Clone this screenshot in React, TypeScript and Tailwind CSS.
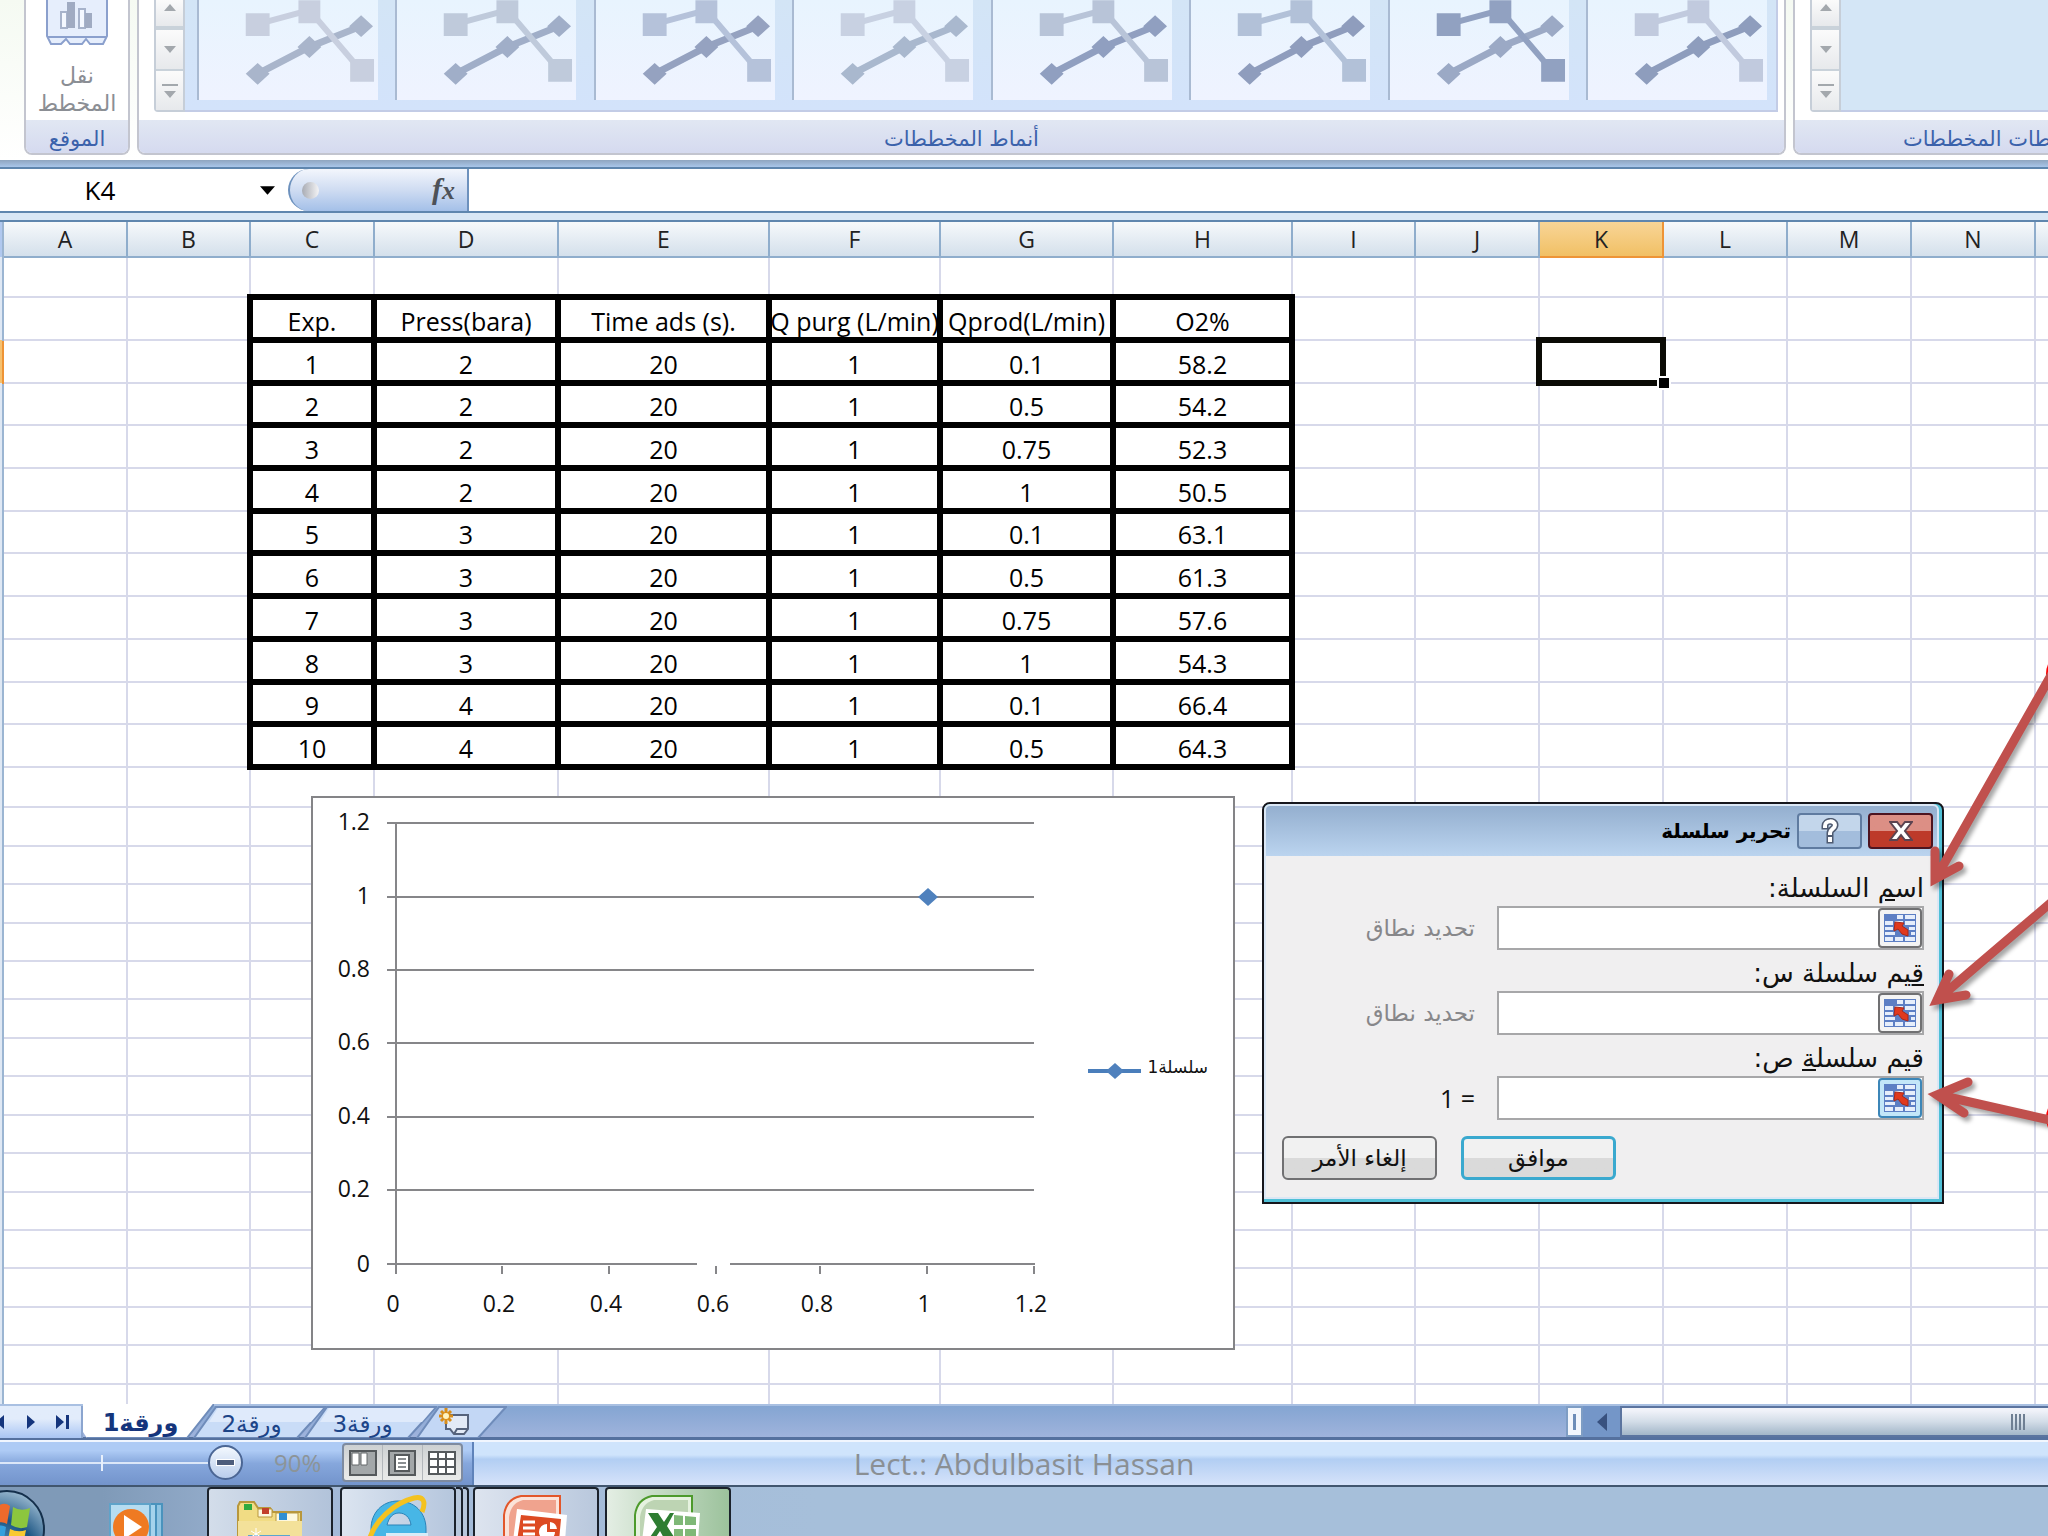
import React from "react";

const LATIN = "font-['Open_Sans','Lato',sans-serif]";
const ARABIC = "font-['DejaVu_Sans',sans-serif]";

/* ---------- Ribbon ---------- */

const galleryStyles = [
  { line: "#a9b5cb", box: "#c8cfdf" },
  { line: "#a0aec8", box: "#bfcadb" },
  { line: "#95a2c0", box: "#b5c2da" },
  { line: "#a9b8ce", box: "#c8d1e2" },
  { line: "#909fc0", box: "#b8c4d8" },
  { line: "#8f9dbd", box: "#b2c1d8" },
  { line: "#9ba9c5", box: "#91a1c1" },
  { line: "#8e9dbd", box: "#c1cade" },
];

function ScatterThumb({ line, box }: { line: string; box: string }) {
  return (
    <button
      aria-label="Chart style"
      className="h-[100px] w-[181px] shrink-0 border-l-2 border-[#a9bad2] bg-gradient-to-b from-[#e8f4fe] to-[#eff3ff]"
    >
      <svg viewBox="0 0 180 100" className="block h-[100px] w-[179px]">
        <path d="M59 74 L111 47 L163 26" stroke={line} strokeWidth="7" fill="none" />
        <path d="M59 24 L111 10 L164 72" stroke={box} strokeWidth="6" fill="none" />
        <path
          d="M59 63l12 11-12 11-12-11zM111 36l12 11-12 11-12-11zM163 15l12 11-12 11-12-11z"
          fill={line}
        />
        <path d="M47 13h24v23H47zM100 0h22v23h-22zM152 59h24v23h-24z" fill={box} />
      </svg>
    </button>
  );
}

function GallerySpin() {
  const cell =
    "flex w-full items-center justify-center border-[#c9d2da] bg-gradient-to-b from-[#fbfbfb] to-[#e7e9ec]";
  return (
    <div className="flex h-[112px] w-[31px] shrink-0 flex-col rounded-bl border-x-2 border-b-2 border-[#c6ced8]">
      <button aria-label="Scroll up" className={`${cell} h-7 border-b-2 pb-3`}>
        <svg viewBox="0 0 12 7" className="h-[7px] w-3">
          <path d="M6 0l6 7H0z" fill="#a3a8ad" />
        </svg>
      </button>
      <button aria-label="Scroll down" className={`${cell} h-[43px] border-b-2 border-t-2`}>
        <svg viewBox="0 0 12 7" className="h-[7px] w-3">
          <path d="M0 0h12L6 7z" fill="#a3a8ad" />
        </svg>
      </button>
      <button aria-label="More styles" className={`${cell} h-[39px]`}>
        <svg viewBox="0 0 16 14" className="h-[14px] w-4">
          <path d="M0 0h16v2H0zM2 7h12L8 14z" fill="#a3a8ad" />
        </svg>
      </button>
    </div>
  );
}

function PanelTitle({ children, className }: { children: React.ReactNode; className: string }) {
  return (
    <div
      dir="rtl"
      className={`flex h-[33px] shrink-0 items-center whitespace-nowrap bg-gradient-to-b from-[#e1e7f3] to-[#d5daef] pt-1 text-[21px] leading-7 text-[#3b62ab] ${ARABIC} ${className}`}
    >
      {children}
    </div>
  );
}

function Ribbon() {
  const panel =
    "flex h-[155px] flex-col overflow-hidden rounded-b-lg border-x-2 border-b-2 border-[#c3c5cf] bg-white";
  return (
    <header className="flex h-40 shrink-0 items-start gap-[7px] bg-gradient-to-b from-[#f5faf2] to-white pl-6">
      <section className={`${panel} w-[106px] shrink-0`}>
        <button className="flex flex-1 flex-col items-center">
          <svg viewBox="0 0 62 46" className="h-[46px] w-[62px]">
            <path
              d="M1 -4h60v40l-4 8H44l-4-5-4 5H24l-4-5-5 5H5l-4-8z"
              fill="#e6eefc"
              stroke="#8ba0cd"
              strokeWidth="2"
            />
            <path d="M2 37h58" stroke="#8ba0cd" strokeWidth="2" />
            <path d="M15 12h6v16h-6zM33 9h6v19h-6z" fill="#f4f8ff" stroke="#a7b3cb" strokeWidth="2" />
            <path d="M21 2h8v26h-8zM39 13h7v15h-7z" fill="#a0abc2" />
          </svg>
          <span
            dir="rtl"
            className={`mt-4 flex flex-col text-center text-[22px] leading-7 text-[#8b8e94] ${ARABIC}`}
          >
            <span>نقل</span>
            <span>المخطط</span>
          </span>
        </button>
        <PanelTitle className="justify-center">الموقع</PanelTitle>
      </section>

      <section className={`${panel} min-w-0 flex-1`}>
        <div className="flex flex-1 items-start pl-[15px] pr-[6px]">
          <GallerySpin />
          <div className="flex h-[112px] min-w-0 flex-1 items-start justify-between overflow-hidden border-b-2 border-r-2 border-[#c3cce6] bg-gradient-to-b from-[#d3e5f6] to-[#d3e3fb] pl-3 pr-[9px]">
            {galleryStyles.map((s, i) => (
              <ScatterThumb key={i} line={s.line} box={s.box} />
            ))}
          </div>
        </div>
        <PanelTitle className="justify-center">أنماط المخططات</PanelTitle>
      </section>

      <section className="flex h-[155px] w-[255px] shrink-0 flex-col overflow-hidden rounded-bl-lg border-b-2 border-l-2 border-[#c3c5cf] bg-white">
        <div className="flex flex-1 items-start pl-[15px]">
          <GallerySpin />
          <div className="h-[112px] flex-1 border-b-2 border-[#c3cce6] bg-[#d4e6f6]" />
        </div>
        <div className="overflow-hidden">
          <PanelTitle className="w-[420px] justify-end pl-[108px]">تخطيطات المخططات</PanelTitle>
        </div>
      </section>
    </header>
  );
}

/* ---------- Formula bar ---------- */

function FormulaBar() {
  return (
    <div className="flex h-[46px] shrink-0 items-stretch border-y-2 border-[#5f86ae] bg-white">
      <div className="flex w-72 shrink-0 items-center">
        <input
          aria-label="Name box"
          defaultValue="K4"
          className={`w-[200px] bg-transparent text-center text-[26px] text-black outline-none ${LATIN}`}
        />
        <button aria-label="Name list" className="ml-[60px] flex h-8 w-[15px] items-center">
          <svg viewBox="0 0 16 9" className="h-[9px] w-[15px]">
            <path d="M0 0h16L8 9z" fill="#000" />
          </svg>
        </button>
      </div>
      <button
        aria-label="Insert function"
        className="flex w-[181px] shrink-0 items-center rounded-l-full border-l-2 border-r-2 border-[#6d91bd] bg-gradient-to-b from-[#f3f6fc] via-[#cfdcf2] to-[#a4c0e8] pl-3 pr-3"
      >
        <span className="size-[17px] rounded-full bg-gradient-to-r from-[#a9acb4] to-[#f4f4f6]" />
        <span className="ml-auto font-['Liberation_Serif',serif] text-[30px] font-bold italic leading-8 text-[#4d5158]">
          f<span className="text-[26px]">x</span>
        </span>
      </button>
      <input aria-label="Formula" className="min-w-0 flex-1 bg-transparent outline-none" />
    </div>
  );
}

/* ---------- Sheet ---------- */

const columns = [
  { id: "A", w: 124 },
  { id: "B", w: 123 },
  { id: "C", w: 124 },
  { id: "D", w: 184 },
  { id: "E", w: 211 },
  { id: "F", w: 171 },
  { id: "G", w: 173 },
  { id: "H", w: 179 },
  { id: "I", w: 123 },
  { id: "J", w: 124 },
  { id: "K", w: 124 },
  { id: "L", w: 124 },
  { id: "M", w: 124 },
  { id: "N", w: 124 },
];

const rowHeights = [
  40, 43, 43, 42, 43, 43, 42, 43, 43, 43, 42, 43, 40, 39, 38, 39, 38, 38, 39, 38, 39, 38, 39, 38, 38, 39, 38, 39, 30,
];

const data = [
  ["Exp.", "Press(bara)", "Time ads (s).", "Q purg (L/min)", "Qprod(L/min)", "O2%"],
  ["1", "2", "20", "1", "0.1", "58.2"],
  ["2", "2", "20", "1", "0.5", "54.2"],
  ["3", "2", "20", "1", "0.75", "52.3"],
  ["4", "2", "20", "1", "1", "50.5"],
  ["5", "3", "20", "1", "0.1", "63.1"],
  ["6", "3", "20", "1", "0.5", "61.3"],
  ["7", "3", "20", "1", "0.75", "57.6"],
  ["8", "3", "20", "1", "1", "54.3"],
  ["9", "4", "20", "1", "0.1", "66.4"],
  ["10", "4", "20", "1", "0.5", "64.3"],
];

function Grid() {
  return (
    <table className={`w-full table-fixed border-collapse ${LATIN}`}>
      <colgroup>
        <col className="w-[3px]" />
        {columns.map((c) => (
          <col key={c.id} style={{ width: c.w }} />
        ))}
        <col />
      </colgroup>
      <thead>
        <tr className="h-[35px] bg-gradient-to-b from-[#f6f9fb] to-[#d3dfeb]">
          <th className="border-r-2 border-[#9bb5d2] bg-[#b0c8ef] p-0" />
          {columns.map((c) => (
            <th
              key={c.id}
              scope="col"
              className={
                c.id === "K"
                  ? "border-2 border-t-0 border-[#ee9436] bg-gradient-to-b from-[#f8d596] to-[#f1c064] p-0 text-[23px] font-normal leading-8 text-[#222]"
                  : "border-b-2 border-r-2 border-[#8fadcc] p-0 text-[23px] font-normal leading-8 text-[#222]"
              }
            >
              {c.id}
            </th>
          ))}
          <th className="border-b-2 border-[#8fadcc] p-0" />
        </tr>
      </thead>
      <tbody>
        {rowHeights.map((h, r) => (
          <tr key={r} style={{ height: h }}>
            <td
              className={
                r === 2
                  ? "border-r-2 border-[#ee9436] bg-[#f5c170] p-0"
                  : "border-r-2 border-[#9bb5d2] bg-[#dfe8f4] p-0"
              }
            />
            {columns.map((c, i) => {
              const value = r >= 1 && r <= 11 && i >= 2 && i <= 7 ? data[r - 1][i - 2] : null;
              if (value !== null) {
                return (
                  <td
                    key={c.id}
                    className="border-[6px] border-black p-0 pt-1 text-center text-[25px] leading-7 text-black"
                  >
                    <span className="-mx-2 flex justify-center whitespace-nowrap">{value}</span>
                  </td>
                );
              }
              return (
                <td key={c.id} className="relative border-2 border-[#d7d9ea] p-0">
                  {c.id === "K" && r === 2 && (
                    <span className="absolute -bottom-1 -left-1 -right-1 -top-1 z-10 block border-[6px] border-[#0b0b05]">
                      <span className="absolute -bottom-[10px] -right-[11px] block size-[14px] border-2 border-white bg-black" />
                    </span>
                  )}
                </td>
              );
            })}
            <td className="border-b-2 border-[#d7d9ea] p-0" />
          </tr>
        ))}
      </tbody>
    </table>
  );
}

/* ---------- Chart ---------- */

const yTicks = [
  { label: "1.2", y: 25 },
  { label: "1", y: 99 },
  { label: "0.8", y: 172 },
  { label: "0.6", y: 245 },
  { label: "0.4", y: 319 },
  { label: "0.2", y: 392 },
];
const xTicks = [
  { label: "0", x: 83 },
  { label: "0.2", x: 189 },
  { label: "0.4", x: 296 },
  { label: "0.6", x: 403 },
  { label: "0.8", x: 507 },
  { label: "1", x: 614 },
  { label: "1.2", x: 721 },
];

function Chart() {
  return (
    <figure className="absolute left-[311px] top-[574px] z-10 h-[554px] w-[924px] border-2 border-[#848487] bg-white">
      <svg viewBox="0 0 920 550" className="block h-[550px] w-[920px] font-['Open_Sans',sans-serif]">
        <g stroke="#868689" strokeWidth="2">
          {yTicks.map((t) => (
            <line key={t.label} x1="74" x2="721" y1={t.y} y2={t.y} />
          ))}
          <path d="M74 466H384M417 466H722" />
          <line x1="83" x2="83" y1="25" y2="476" />
          {xTicks.slice(1).map((t) => (
            <line key={t.label} x1={t.x} x2={t.x} y1="468" y2="476" />
          ))}
        </g>
        <g fontSize="23" fill="#111" textAnchor="end">
          {yTicks.map((t) => (
            <text key={t.label} x="57" y={t.y + 7}>
              {t.label}
            </text>
          ))}
          <text x="57" y="474">
            0
          </text>
        </g>
        <g fontSize="23" fill="#111" textAnchor="middle">
          {xTicks.map((t) => (
            <text key={t.label} x={t.x - 3} y="514">
              {t.label}
            </text>
          ))}
        </g>
        <path d="M615 90l10 9-10 9-10-9z" fill="#4f81bd" />
        <path d="M775 273h53" stroke="#4a7ebb" strokeWidth="4" />
        <path d="M802 265l9 8-9 8-9-8z" fill="#4f81bd" />
        <text x="895" y="275" fontSize="17" fill="#111" direction="rtl" fontFamily="DejaVu Sans">
          سلسلة1
        </text>
      </svg>
    </figure>
  );
}

/* ---------- Dialog ---------- */

function RangeIcon() {
  return (
    <svg viewBox="0 0 32 28" className="h-7 w-8">
      <rect width="32" height="28" fill="#5d7fc4" />
      <path
        d="M13 1h6v4h-6zM21 1h10v4H21zM1 7h8v4H1zM11 7h8v4h-8zM21 7h10v4H21zM1 13h8v3H1zM25 13h6v3h-6zM1 18h10v3H1zM27 18h4v3h-4zM1 23h8v4H1zM11 23h8v4h-8zM21 23h10v4H21z"
        fill="#e6eefb"
      />
      <path
        d="M11 8l9 1-2 3 6 4v6l-6-2-4-5-4 2z"
        fill="#e0391d"
        stroke="#a8281a"
        strokeWidth="1"
      />
    </svg>
  );
}

function Field({
  id,
  label,
  hint,
  hintClass,
  active,
}: {
  id: string;
  label: React.ReactNode;
  hint: string;
  hintClass: string;
  active?: boolean;
}) {
  return (
    <div>
      <label htmlFor={id} className="block h-9 text-[26px] leading-9 text-[#111]">
        {label}
      </label>
      <div className="flex items-center gap-[22px]">
        <div className="flex h-11 w-[427px] items-center border-2 border-[#a7a7a9] bg-white">
          <button
            type="button"
            aria-label="Select range"
            className={
              active
                ? "flex h-10 w-[44px] items-center justify-center rounded border-2 border-[#3c86b8] bg-[#c3e6f8]"
                : "flex h-10 w-[44px] items-center justify-center rounded border-2 border-[#707072] bg-[#f4f4f4]"
            }
          >
            <RangeIcon />
          </button>
          <input id={id} className="h-full min-w-0 flex-1 bg-transparent px-2 outline-none" />
        </div>
        <span className={hintClass}>{hint}</span>
      </div>
    </div>
  );
}

function SeriesDialog() {
  const hint = "text-[23px] leading-8 text-[#87878a]";
  const titleBtn = "flex h-9 w-[65px] items-center justify-center rounded border-2";
  return (
    <div
      role="dialog"
      aria-labelledby="dlg-title"
      className={`absolute left-[1262px] top-[580px] z-20 w-[682px] rounded-t-lg border-2 border-[#16161c] bg-[#50c0d6] pb-[3px] pr-[3px] ${ARABIC}`}
    >
      <div className="rounded-t-md border-2 border-[#dbe7f5] bg-[#f0eff0]">
        <div className="flex h-[50px] items-center justify-end gap-[6px] rounded-t bg-gradient-to-b from-[#94afcf] to-[#bbd4ef] pr-1">
          <h2 id="dlg-title" dir="rtl" className="text-[20px] font-bold leading-8 text-black">
            تحرير سلسلة
          </h2>
          <button
            aria-label="Help"
            className={`${titleBtn} border-[#5f7ba0] bg-gradient-to-b from-[#c3d6eb] from-50% to-[#a3bddc] to-50%`}
          >
            <svg viewBox="0 0 20 26" className="h-[26px] w-5">
              <g fill="none" strokeLinecap="square">
                <path d="M5 8c0-6 10-6 10-1 0 4-5 4-5 8M10 21v1" stroke="#4e5a70" strokeWidth="7" />
                <path d="M5 8c0-6 10-6 10-1 0 4-5 4-5 8M10 21v1" stroke="#fff" strokeWidth="4" />
              </g>
            </svg>
          </button>
          <button
            aria-label="Close"
            className={`${titleBtn} border-[#4d1420] bg-gradient-to-b from-[#dc8f85] from-50% to-[#bd3a2a] to-50%`}
          >
            <svg viewBox="0 0 24 20" className="h-5 w-6">
              <g fill="#fff" stroke="#5c4350" strokeWidth="2">
                <path d="M1 1h7l4 5 4-5h7l-7 9 7 9h-7l-4-5-4 5H1l7-9z" />
              </g>
            </svg>
          </button>
        </div>
        <form dir="rtl" className="pb-[17px] pl-4 pr-[13px] pt-[14px]">
          <div className="flex flex-col gap-[5px]">
            <Field
              id="series-name"
              label={
                <>
                  اس<u>م</u> السلسلة:
                </>
              }
              hint="تحديد نطاق"
              hintClass={hint}
            />
            <Field
              id="series-x"
              label={
                <>
                  <u>ق</u>يم سلسلة س:
                </>
              }
              hint="تحديد نطاق"
              hintClass={hint}
            />
            <Field
              id="series-y"
              active
              label={
                <>
                  قيم سلسل<u>ة</u> ص:
                </>
              }
              hint="= 1"
              hintClass="font-['Open_Sans',sans-serif] text-[25px] leading-8 text-[#111]"
            />
          </div>
          <div className="mt-4 flex justify-end gap-6">
            <button
              type="button"
              className="h-11 w-[155px] rounded-md border-[3px] border-[#3aa9cf] bg-gradient-to-b from-[#f1f1f1] from-50% to-[#dadada] to-50% text-[23px] leading-8 text-[#111]"
            >
              موافق
            </button>
            <button
              type="button"
              className="h-11 w-[155px] rounded-md border-2 border-[#707072] bg-gradient-to-b from-[#f1f1f1] from-50% to-[#dadada] to-50% text-[23px] leading-8 text-[#111]"
            >
              إلغاء الأمر
            </button>
          </div>
        </form>
      </div>
    </div>
  );
}

function Arrows() {
  return (
    <svg
      viewBox="0 0 130 500"
      className="absolute left-[1918px] top-[428px] z-30 h-[500px] w-[130px] drop-shadow-[3px_4px_2px_rgba(0,0,0,0.35)]"
    >
      <ellipse cx="139" cy="24" rx="11" ry="17" fill="#f00" />
      <ellipse cx="139" cy="468" rx="11" ry="17" fill="#f00" />
      <g stroke="#c0504d" strokeWidth="9" fill="none" strokeLinecap="round" strokeLinejoin="miter">
        <path d="M136 20L18 228M17 201L17 229L41 216" />
        <path d="M136 250L19 350M31 324L19 350L48 345" />
        <path d="M136 471L21 445M50 432L19 445L46 463" />
      </g>
    </svg>
  );
}

/* ---------- Bottom bars ---------- */

function SheetTab({ label, className }: { label: string; className: string }) {
  return (
    <button
      dir="rtl"
      className={`relative flex h-8 w-[133px] items-center justify-center pr-4 pt-1 text-[23px] leading-7 text-[#1c4488] ${ARABIC} ${className}`}
    >
      <svg viewBox="0 0 133 32" preserveAspectRatio="none" className="absolute inset-0 h-full w-full">
        <path d="M1 32L23 1H132L104 32z" fill="#c9dcf7" stroke="#6f8cba" strokeWidth="2" />
        <path d="M16 16L25 2H130L118 16z" fill="#dfeafb" />
      </svg>
      <span className="relative">{label}</span>
    </button>
  );
}

function TabBar() {
  return (
    <div className="flex h-9 shrink-0 items-start border-b-[3px] border-t-2 border-b-[#55719f] border-t-[#a9c0e2] bg-gradient-to-b from-[#84a5d2] to-[#9fb3dc]">
      <div className="flex h-8 w-[83px] shrink-0 items-center gap-[20px] border-r-2 border-[#8ba5cf] bg-gradient-to-b from-[#e2ecfb] from-40% to-[#a9c5f3]">
        <button aria-label="Previous sheet">
          <svg viewBox="0 0 10 14" className="h-[14px] w-[10px]">
            <path d="M4 0v14L-4 7z" fill="#15357c" />
          </svg>
        </button>
        <button aria-label="Next sheet" className="-ml-1">
          <svg viewBox="0 0 10 14" className="h-[14px] w-[10px]">
            <path d="M1 0v14l8-7z" fill="#15357c" />
          </svg>
        </button>
        <button aria-label="Last sheet">
          <svg viewBox="0 0 14 14" className="h-[14px] w-[14px]">
            <path d="M0 0v14l8-7zM10 0h3v14h-3z" fill="#15357c" />
          </svg>
        </button>
      </div>
      <button
        dir="rtl"
        className={`relative z-10 -mt-[2px] flex h-[34px] w-[131px] items-center justify-center pr-4 pt-1 text-[24px] font-bold leading-7 text-[#15357c] ${ARABIC}`}
      >
        <svg viewBox="0 0 131 34" preserveAspectRatio="none" className="absolute inset-0 h-full w-full">
          <path d="M0 0H131L104 34H4L0 28z" fill="#fff" />
          <path d="M131 0L104 34H4" fill="none" stroke="#6f8cba" strokeWidth="2" />
        </svg>
        <span className="relative">ورقة1</span>
      </button>
      <SheetTab label="ورقة2" className="-ml-[21px]" />
      <SheetTab label="ورقة3" className="-ml-[22px]" />
      <button aria-label="Insert sheet" className="relative -ml-[21px] h-8 w-[91px]">
        <svg viewBox="0 0 91 32" className="block h-8 w-[91px]">
          <path d="M1 32L23 1H90L62 32z" fill="#c3d7f5" stroke="#6f8cba" strokeWidth="2" />
          <path d="M30 9h22v14l-4 5H38l-4-5h-4z" fill="#e3eaf6" stroke="#56637c" strokeWidth="2" />
          <path d="M38 28l3-5h11" fill="none" stroke="#56637c" strokeWidth="2" />
          <path d="M30 2v16M23 10h14M25 5l10 10M35 5L25 15" stroke="#d98d18" strokeWidth="3" />
          <circle cx="30" cy="10" r="3" fill="#fff3c0" />
        </svg>
      </button>

      <div className="ml-auto flex h-[31px] w-[482px] shrink-0 items-stretch">
        <div className="flex w-[17px] items-center justify-center border-2 border-[#7e9dc4] bg-[#f2f6fc]">
          <span className="h-4 w-[3px] bg-[#6d8db8]" />
        </div>
        <button aria-label="Scroll left" className="flex w-[37px] items-center justify-center bg-[#7496c8]">
          <svg viewBox="0 0 10 18" className="h-[18px] w-[10px]">
            <path d="M10 0v18L0 9z" fill="#38517f" />
          </svg>
        </button>
        <div className="flex flex-1 items-center justify-end border-2 border-r-0 border-[#5b749f] bg-gradient-to-b from-[#f0f2f9] from-10% via-[#d3dde8] via-50% to-[#a3b6c8]">
          <div className="mr-[23px] flex gap-[2px]">
            <span className="h-4 w-[2px] bg-[#6f7f93]" />
            <span className="h-4 w-[2px] bg-[#6f7f93]" />
            <span className="h-4 w-[2px] bg-[#6f7f93]" />
            <span className="h-4 w-[2px] bg-[#6f7f93]" />
          </div>
        </div>
      </div>
    </div>
  );
}

function StatusBar() {
  const view = "flex flex-1 items-center justify-center";
  return (
    <div className="relative flex h-[47px] shrink-0 border-b-2 border-t-2 border-b-[#41566f] border-t-[#f1f6fe] bg-gradient-to-b from-[#cfe4fc] from-30% via-[#b2cef3] via-40% to-[#d6e3fa]">
      <div className="flex w-[474px] shrink-0 items-center border-r-2 border-[#5f83ba] bg-gradient-to-b from-[#aecbf5] from-20% via-[#86a7dc] via-50% to-[#7394cc] pb-[2px]">
        <div className="flex w-[208px] items-center">
          <span className="h-[2px] w-[101px] bg-[#dbe7f8]" />
          <span className="h-4 w-[2px] bg-[#e8f0fb]" />
          <span className="h-[2px] flex-1 bg-[#dbe7f8]" />
        </div>
        <button
          aria-label="Zoom out"
          className="flex size-[35px] items-center justify-center rounded-full border-2 border-[#4b6694] bg-gradient-to-b from-[#f3f8fe] to-[#b9cdec]"
        >
          <span className="h-[7px] w-[19px] border border-white bg-[#4d5d7c]" />
        </button>
        <span className="ml-[31px] w-[68px] font-['Open_Sans',sans-serif] text-[24px] leading-8 text-[#8c9498]">
          90%
        </span>
        <div className="flex h-[39px] w-[121px] overflow-hidden rounded border-2 border-[#7e8ba0] bg-gradient-to-b from-[#ccd0d2] via-[#dedfdf] to-[#eaebea]">
          <button aria-label="Page break preview" className={`${view} border-r border-[#b3b7bb]`}>
            <svg viewBox="0 0 28 26" className="h-[26px] w-7">
              <rect x="1" y="1" width="26" height="24" fill="#a3a7a9" stroke="#55595c" strokeWidth="2" />
              <path d="M3 3h7v12H3zM12 3h6v12h-6z" fill="#fff" stroke="#64686b" strokeWidth="1" />
            </svg>
          </button>
          <button aria-label="Page layout" className={`${view} border-r border-[#b3b7bb]`}>
            <svg viewBox="0 0 28 26" className="h-[26px] w-7">
              <rect x="1" y="1" width="26" height="24" fill="#a3a7a9" stroke="#55595c" strokeWidth="2" />
              <rect x="7" y="5" width="14" height="16" fill="#fff" stroke="#55595c" strokeWidth="2" />
              <path d="M10 9h8M10 13h8M10 17h8" stroke="#8b8f92" strokeWidth="2" />
            </svg>
          </button>
          <button aria-label="Normal view" className={view}>
            <svg viewBox="0 0 28 24" className="h-6 w-7">
              <rect x="1" y="1" width="26" height="22" fill="#fff" stroke="#55595c" strokeWidth="2" />
              <path d="M10 1v22M18 1v22M1 8h26M1 16h26" stroke="#55595c" strokeWidth="2" />
            </svg>
          </button>
        </div>
      </div>
      <p
        className={`pointer-events-none absolute inset-0 flex items-center justify-center text-[30px] leading-10 text-[#8a8f94] ${LATIN}`}
      >
        Lect.: Abdulbasit Hassan
      </p>
    </div>
  );
}

function Taskbar() {
  const btn = "flex h-[50px] items-start justify-center rounded-t border-2 border-b-0 border-[#1b222c]";
  return (
    <footer className="flex h-[49px] shrink-0 items-start overflow-hidden bg-gradient-to-r from-[#7f9ab8] from-5% via-[#a3b9d8] via-15% to-[#a6bfda] to-40%">
      <button aria-label="Start" className="w-[46px]">
        <svg viewBox="0 0 46 49" className="block h-[49px] w-[46px]">
          <defs>
            <radialGradient id="orb" cx="35%" cy="90%" r="90%">
              <stop offset="0" stopColor="#6fb6e0" />
              <stop offset="0.6" stopColor="#1c5583" />
              <stop offset="1" stopColor="#8fb0c9" />
            </radialGradient>
          </defs>
          <ellipse cx="7" cy="42" rx="37" ry="38" fill="url(#orb)" stroke="#15304c" strokeWidth="2" />
          <path d="M-4 20q8-6 14-1l-3 18q-6-4-14 1z" fill="#ee6a2b" />
          <path d="M13 20q8 5 17 1l-3 19q-8 3-16-2z" fill="#8cc63e" />
          <path d="M-6 40q8-3 12 0l-2 12h-12z" fill="#35a0dd" />
          <path d="M10 42q8 4 16 1l-2 10H8z" fill="#f9c932" />
        </svg>
      </button>
      <button aria-label="Media player" className="ml-[62px] mt-4 w-[56px]">
        <svg viewBox="0 0 56 34" className="block h-[34px] w-14">
          <path d="M14 1h40v33H14z" fill="#8fc4e2" stroke="#4a93bd" strokeWidth="2" />
          <path d="M8 1h40v33H8z" fill="#a5d3ec" stroke="#4a93bd" strokeWidth="2" />
          <path d="M2 1h40v33H2z" fill="#b6dcf0" stroke="#5fa3c9" strokeWidth="2" />
          <circle cx="23" cy="24" r="18" fill="#ef7a22" />
          <path d="M16 12l18 12-18 12z" fill="#fff" />
        </svg>
      </button>
      <button aria-label="Explorer" className={`${btn} ml-[43px] w-[126px] bg-gradient-to-r from-[#d3ddea] to-[#b2c3da] pt-[12px]`}>
        <svg viewBox="0 0 68 36" className="h-9 w-[68px]">
          <path d="M2 36V5l2-4h14l4 6h12l3 4h28v25z" fill="#f1dc84" stroke="#b8973c" strokeWidth="2" />
          <path d="M22 8h14v8H22zM40 12h22v9H40z" fill="#fdf8de" stroke="#b8973c" strokeWidth="1" />
          <path d="M8 3h8v6H8z" fill="#2faa3f" />
          <path d="M26 7h7v6h-7z" fill="#c3402b" />
          <path d="M43 12h8v7h-8z" fill="#2f8fd3" />
          <path d="M2 20h64v16H2z" fill="#f3e19a" />
          <path d="M12 34h42v3H12z" fill="#5aa6cf" />
          <path d="M20 27v9M15 30l10 6M25 30l-10 6" stroke="#fff" strokeWidth="1" />
        </svg>
      </button>
      <button aria-label="Internet Explorer" className={`${btn} ml-[7px] w-[116px] bg-gradient-to-r from-[#dbe4f0] to-[#b5c6dd] pt-[6px]`}>
        <svg viewBox="0 0 64 44" className="h-11 w-16">
          <path
            d="M32 6c-16 0-27 12-27 28 0 5 1 9 3 12h52V34C60 17 48 6 32 6zm-11 24c2-8 6-12 12-12s11 4 12 12z"
            fill="#47b6e6"
            fillRule="evenodd"
            stroke="#2a83b8"
            strokeWidth="1"
          />
          <path d="M20 38h42v6H20z" fill="#d8ecf7" />
          <path d="M3 46C8 26 28 8 48 3c10-2 12 4 8 14" fill="none" stroke="#f4c21f" strokeWidth="5" />
        </svg>
      </button>
      <span className="h-[50px] w-[7px] rounded-tr border-r-2 border-t-2 border-[#1b222c] bg-[#b7c7dc]" />
      <span className="h-[50px] w-[6px] rounded-tr border-r-2 border-t-2 border-[#1b222c] bg-[#b7c7dc]" />
      <button aria-label="PowerPoint" className={`${btn} ml-[4px] w-[126px] bg-gradient-to-r from-[#dde4ef] to-[#b9c8dd] pt-[6px]`}>
        <svg viewBox="0 0 66 44" className="h-11 w-[66px]">
          <path d="M1 44V20Q3 4 18 1H57V44z" fill="#fbe3d9" stroke="#e2572b" strokeWidth="2" />
          <path d="M6 44V22Q8 8 20 5H53V44z" fill="#f0a38e" />
          <path d="M14 14l50 6-2 26H10z" fill="#fff" />
          <path d="M18 20l40 4-2 22H14z" fill="#dd4a22" />
          <path d="M20 27h12M20 33h12M20 39h12" stroke="#fff" strokeWidth="3" />
          <path d="M44 29a8 8 0 1 0 8 8h-8z" fill="#fff" />
          <path d="M47 27a8 8 0 0 1 7 7h-7z" fill="#fff" />
        </svg>
      </button>
      <button aria-label="Excel" className={`${btn} ml-[6px] w-[126px] bg-gradient-to-r from-[#e4eee4] to-[#9cc29c] pt-[6px]`}>
        <svg viewBox="0 0 68 44" className="h-11 w-[68px]">
          <path d="M1 44V20Q3 4 18 1H58V44z" fill="#e6f2df" stroke="#4d9a2c" strokeWidth="2" />
          <path d="M6 44V22Q8 8 20 5H54V44z" fill="#bdd4b3" />
          <path d="M12 14l54 4-2 28H8z" fill="#fff" />
          <path d="M40 20l22 2v8H40zM40 34h22v8H40z" fill="#7fb877" />
          <path d="M50 20v24" stroke="#fff" strokeWidth="2" />
          <path d="M14 18h10l6 9 6-9h4l-7 13 9 14H31l-5-9-6 9h-6l9-13z" fill="#2e7d32" />
        </svg>
      </button>
    </footer>
  );
}

export default function App() {
  return (
    <div className="flex h-screen w-full flex-col overflow-hidden bg-white">
      <Ribbon />
      <div className="h-[7px] shrink-0 bg-gradient-to-b from-[#8fa5bf] to-[#a9c6ea]" />
      <FormulaBar />
      <div className="h-[9px] shrink-0 border-b-2 border-[#5f86ae] bg-[#d9e7f5]" />
      <main className="relative min-h-0 flex-1 overflow-hidden">
        <Grid />
        <Chart />
        <SeriesDialog />
        <Arrows />
      </main>
      <TabBar />
      <StatusBar />
      <Taskbar />
    </div>
  );
}
